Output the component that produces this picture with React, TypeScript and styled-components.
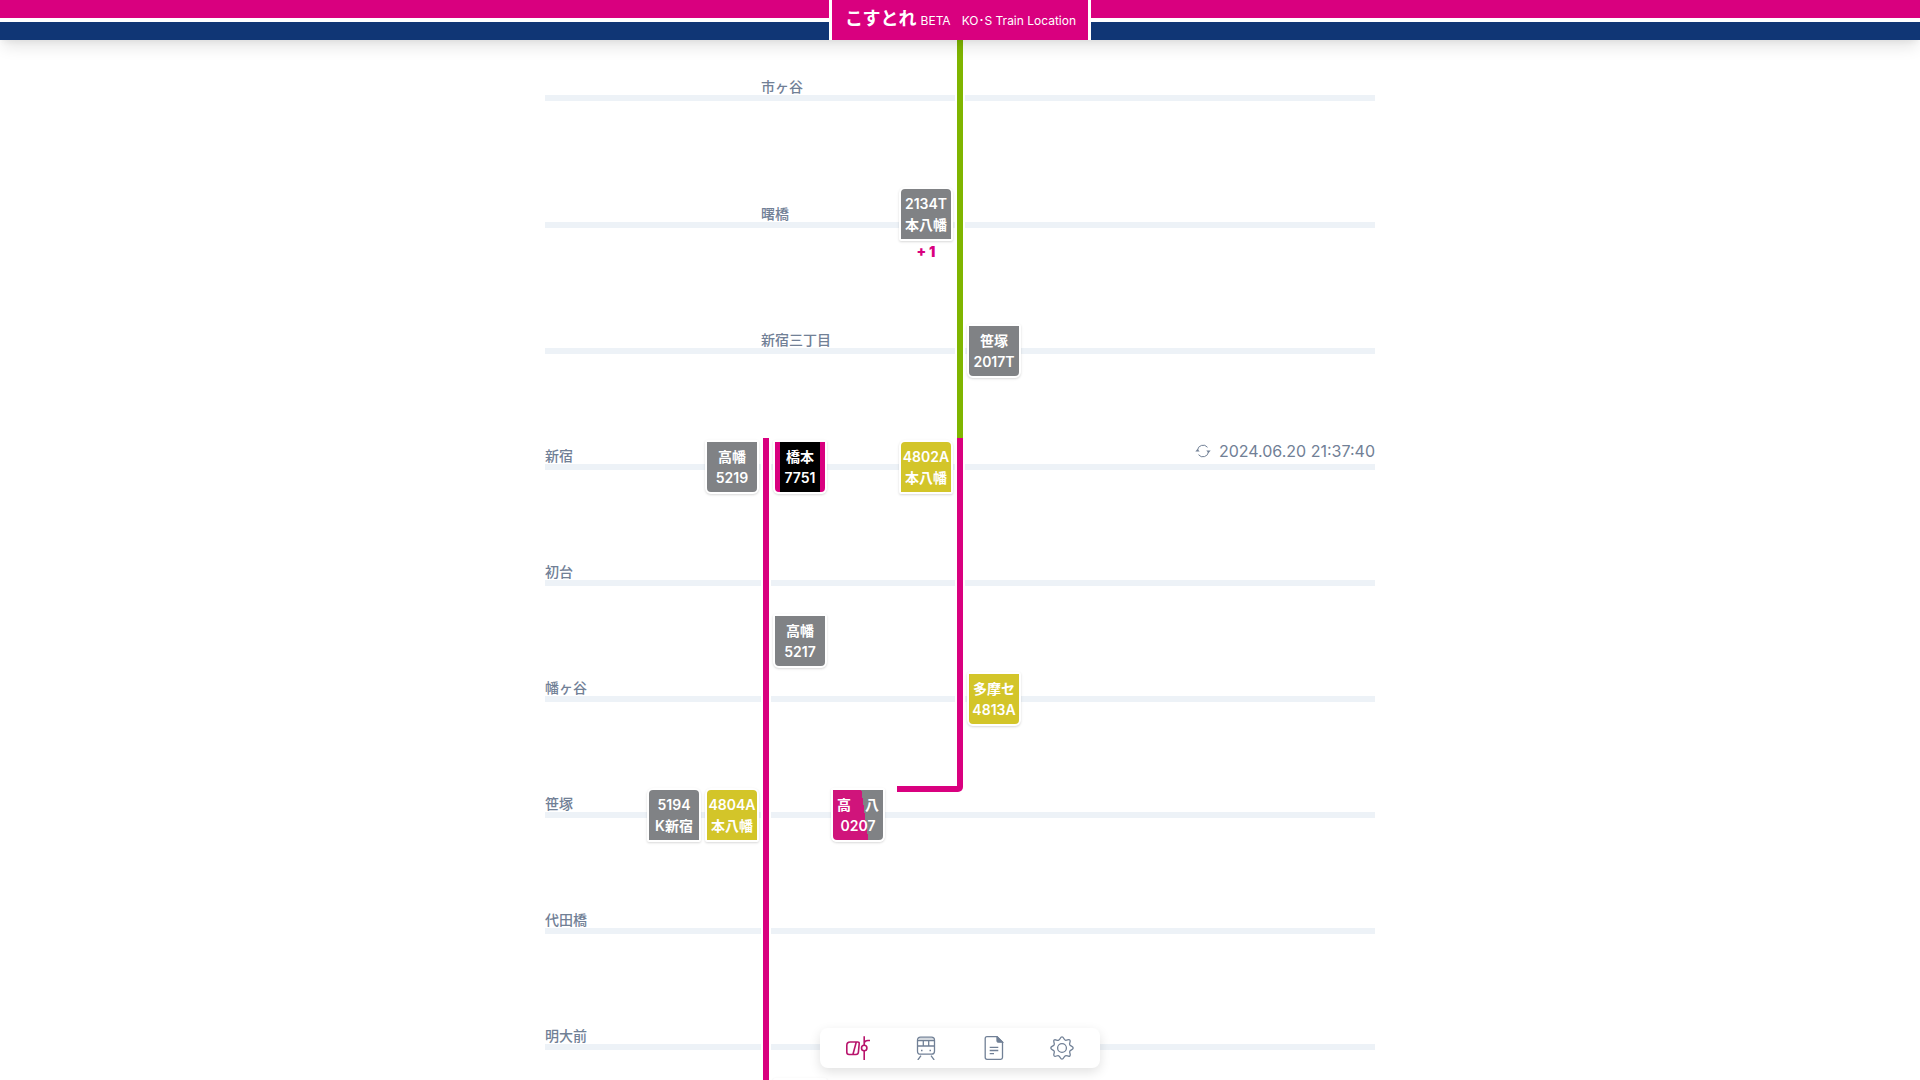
import React from "react";
import styled, { createGlobalStyle, css } from "styled-components";

const PINK = "#d9007f";
const GREEN = "#7fb500";
const GRAY = "#808285";
const YELLOW = "#d3c529";
const SLATE = "#718096";

const GlobalStyle = createGlobalStyle`
  *, *::before, *::after { box-sizing: border-box; }
  body {
    margin: 0;
    background: #fff;
    color: ${SLATE};
    font-family: Inter, "Noto Sans CJK JP", sans-serif;
  }
`;

const Page = styled.div`
  height: 100vh;
  overflow: hidden;
  display: flex;
  flex-direction: column;
`;

const Header = styled.header`
  position: relative;
  z-index: 3;
  flex: none;
  height: 40px;
  display: flex;
  justify-content: center;
  background: linear-gradient(#d9007f 18px, #fff 18px, #fff 22px, #103675 22px);
  box-shadow: 0 10px 15px -3px rgba(0, 0, 0, 0.1), 0 4px 6px -2px rgba(0, 0, 0, 0.05);
`;

const Brand = styled.h1`
  margin: 0;
  padding: 0 12px 0 13px;
  display: flex;
  align-items: baseline;
  border: solid #fff;
  border-width: 0 3px;
  background: ${PINK};
  color: #fff;
  font-size: 12px;
  font-weight: 400;
  line-height: 38px;
  white-space: nowrap;
`;

const BrandName = styled.span`
  font-size: 18px;
  font-weight: 700;
  margin-right: 4px;
`;

const Subtitle = styled.span`
  margin-left: 11px;
`;

const Board = styled.main`
  flex: none;
  width: 100%;
  max-width: 830px;
  margin: 0 auto;
  display: grid;
  grid-template-columns: 100px 58px 58px 10px 58px 58px 10px 58px 10px 58px minmax(0, 1fr);
  grid-template-rows: 29px 58px 58px 79px;
  grid-auto-rows: 58px;
`;

const StationRow = styled.div<{ $row: number }>`
  grid-row: ${(p) => p.$row};
  grid-column: 1 / -1;
  align-self: center;
  height: 6px;
  background: #edf2f7;
`;

const StationName = styled.h2<{ $row: number; $column: number }>`
  grid-row: ${(p) => p.$row};
  grid-column: ${(p) => p.$column} / span 3;
  align-self: center;
  margin: 0 0 22px;
  font-size: 14px;
  font-weight: 500;
  line-height: 20px;
  white-space: nowrap;
`;

const Track = styled.div<{ $column: number; $from: number; $to: number; $color: string }>`
  grid-column: ${(p) => p.$column};
  grid-row: ${(p) => p.$from} / ${(p) => p.$to};
  border: solid #fff;
  border-width: 0 2px;
  background: ${(p) => p.$color};
`;

const BranchEnd = styled.div`
  grid-column: 8 / 10;
  grid-row: 14;
  height: 6px;
  margin-left: 0;
  margin-right: 2px;
  border-radius: 0 0 5px 0;
  background: ${PINK};
`;

type Kind = "local" | "rapid" | "liner" | "split";

const kinds = {
  local: css`background: ${GRAY};`,
  rapid: css`background: ${YELLOW};`,
  liner: css`background: linear-gradient(90deg, ${PINK} 5px, #000 5px, #000 45px, ${PINK} 45px);`,
  split: css`background: linear-gradient(82deg, #d0147b 62%, ${GRAY} 62%);`,
};

const Slot = styled.div<{ $row: number; $column: number }>`
  grid-row: ${(p) => p.$row};
  grid-column: ${(p) => p.$column};
  align-self: start;
  justify-self: center;
  padding-top: 2px;
  position: relative;
`;

const Train = styled.button<{ $kind: Kind; $up: boolean }>`
  display: flex;
  flex-direction: column;
  justify-content: center;
  width: 54px;
  height: 54px;
  padding: 0;
  border: 2px solid #fff;
  border-radius: ${(p) => (p.$up ? "6px 6px 2px 2px" : "2px 2px 6px 6px")};
  ${(p) => kinds[p.$kind]}
  background-origin: padding-box;
  box-shadow: 0 1px 3px rgba(0, 0, 0, 0.1), 0 1px 2px rgba(0, 0, 0, 0.06);
  color: #fff;
  font: 600 14px/21px Inter, "Noto Sans CJK JP", sans-serif;
  white-space: nowrap;
  cursor: pointer;
`;

const TrainLine = styled.span<{ $spread?: boolean }>`
  display: flex;
  width: 100%;
  height: 21px;
  padding: 0 ${(p) => (p.$spread ? 4 : 0)}px;
  justify-content: ${(p) => (p.$spread ? "space-between" : "center")};
`;

const More = styled.div`
  color: ${PINK};
  font-size: 14px;
  font-weight: 900;
  line-height: 21px;
  text-align: center;
`;

const Refresh = styled.button`
  grid-row: 8;
  grid-column: 11;
  align-self: start;
  justify-self: end;
  display: flex;
  align-items: center;
  gap: 8px;
  padding: 1px 0 0;
  border: 0;
  background: none;
  color: inherit;
  font: 400 16px/24px Inter, sans-serif;
  cursor: pointer;
`;

const Nav = styled.nav`
  position: fixed;
  z-index: 4;
  bottom: 12px;
  left: 50%;
  transform: translateX(-50%);
  width: 280px;
  height: 40px;
  padding: 0 4px;
  display: flex;
  border-radius: 8px;
  background: #fff;
  box-shadow: 0 4px 12px rgba(0, 0, 0, 0.12);
`;

const NavLink = styled.a<{ $active?: boolean }>`
  flex: 1;
  display: flex;
  align-items: center;
  justify-content: center;
  color: ${(p) => (p.$active ? "#b8146c" : SLATE)};
`;

const stations = [
  { name: "市ヶ谷", row: 2, column: 4 },
  { name: "曙橋", row: 4, column: 4 },
  { name: "新宿三丁目", row: 6, column: 4 },
  { name: "新宿", row: 8, column: 1 },
  { name: "初台", row: 10, column: 1 },
  { name: "幡ヶ谷", row: 12, column: 1 },
  { name: "笹塚", row: 14, column: 1 },
  { name: "代田橋", row: 16, column: 1 },
  { name: "明大前", row: 18, column: 1 },
];

interface TrainData {
  row: number;
  column: number;
  number: string;
  bound: string[];
  kind: Kind;
  up?: boolean;
  more?: number;
}

const trains: TrainData[] = [
  { row: 4, column: 8, number: "2134T", bound: ["本八幡"], kind: "local", up: true, more: 1 },
  { row: 6, column: 10, number: "2017T", bound: ["笹塚"], kind: "local" },
  { row: 8, column: 3, number: "5219", bound: ["高幡"], kind: "local" },
  { row: 8, column: 5, number: "7751", bound: ["橋本"], kind: "liner" },
  { row: 8, column: 8, number: "4802A", bound: ["本八幡"], kind: "rapid", up: true },
  { row: 11, column: 5, number: "5217", bound: ["高幡"], kind: "local" },
  { row: 12, column: 10, number: "4813A", bound: ["多摩セ"], kind: "rapid" },
  { row: 14, column: 2, number: "5194", bound: ["K新宿"], kind: "local", up: true },
  { row: 14, column: 3, number: "4804A", bound: ["本八幡"], kind: "rapid", up: true },
  { row: 14, column: 6, number: "0207", bound: ["高", "八"], kind: "split" },
  { row: 19, column: 5, number: "", bound: [], kind: "local" },
];

function TrainCard({ train }: { train: TrainData }) {
  const number = <TrainLine key="number">{train.number}</TrainLine>;
  const bound = (
    <TrainLine key="bound" $spread={train.bound.length > 1}>
      {train.bound.map((b) => (
        <span key={b}>{b}</span>
      ))}
    </TrainLine>
  );
  return (
    <Slot $row={train.row} $column={train.column}>
      <Train type="button" $kind={train.kind} $up={!!train.up}>
        {train.up ? [number, bound] : [bound, number]}
      </Train>
      {train.more && <More>+ {train.more}</More>}
    </Slot>
  );
}

const icon = { width: 24, height: 24, viewBox: "0 0 24 24", fill: "none", stroke: "currentColor", strokeWidth: 1.3 };

const LocationIcon = () => (
  <svg {...icon} strokeWidth={1.6}>
    <path d="M4.200 6h7.500q1.600 0 1.500 1.600l-.8 8.700q-.2 2.200-2.400 2.200H3q-2.200 0-2.200-2.200V9.400Q.8 6 4.200 6zM10.300 6 6.900 18.500M18.200.3v9M18.200 14.800V24M24 4.500h-2q-3.800 0-3.800 3.300" />
    <circle cx="18.200" cy="12" r="2.700" />
  </svg>
);

const TrainIcon = () => (
  <svg {...icon}>
    <path d="M3.500 4.700h17M3.500 10h17M9.300 4.700V10M14.700 4.700V10M7 19.700l-3.200 4.300M17 19.700l3.200 4.300" />
    <path d="M6.500 1.200h11q3 0 3 3v11q0 3-3 3h-11q-3 0-3-3v-11q0-3 3-3z" />
    <path d="M4.500 2h15v2.500h-15z" fill="currentColor" fillOpacity=".3" stroke="none" />
    <path d="M7 14.500h1.500M15.500 14.500H17" strokeWidth="1.600" />
  </svg>
);

const DocIcon = () => (
  <svg {...icon}>
    <path d="M5 .7h10l5.500 5.500V21.500q0 1.800-1.800 1.800H5q-1.800 0-1.800-1.800v-19Q3.200.7 5 .7zM7.700 11.300h8.600M7.700 14.500h8.600M7.700 17.700h4.300" />
    <path d="M15 .7v3.700q0 1.800 1.800 1.800h3.700z" fill="currentColor" />
  </svg>
);

const GearIcon = () => (
  <svg {...icon} strokeLinejoin="round">
    <circle cx="12" cy="12" r="4.400" />
    <path d="M12 .8C13.800.8 13.700 3.600 15.300 4.200S18.700 2.800 19.900 4.100 18.900 7.100 19.700 8.700 23.200 10.200 23.200 12 20.500 13.700 19.800 15.300 21.200 18.700 19.900 19.900 16.900 19.100 15.300 19.800 13.800 23.200 12 23.200 10.300 20.500 8.700 19.800 5.300 21.200 4.100 19.900 4.900 16.900 4.200 15.300.8 13.800.8 12 3.500 10.300 4.200 8.700 2.800 5.300 4.100 4.100 7.100 4.900 8.700 4.200 10.200.8 12 .8z" />
  </svg>
);

const RefreshIcon = () => (
  <svg width="16" height="16" viewBox="0 0 16 16" fill="none" stroke="currentColor" strokeWidth="1">
    <path d="M2.500 7.500A5.600 5.600 0 0 1 12.500 4.300M13.500 8.500A5.600 5.600 0 0 1 3.500 11.700" />
    <path d="M.3 8.500 2.500 6l2.200 2.500zM11.300 7.500 13.500 10l2.200-2.500z" fill="currentColor" stroke="none" />
  </svg>
);

export default function App() {
  return (
    <Page>
      <GlobalStyle />
      <Header>
        <Brand>
          <BrandName>こすとれ</BrandName>
          <span>BETA</span>
          <Subtitle>KO･S Train Location</Subtitle>
        </Brand>
      </Header>
      <Board>
        {stations.map((s) => (
          <StationRow key={s.name} $row={s.row} />
        ))}
        <Track $column={9} $from={1} $to={8} $color={GREEN} />
        <Track $column={9} $from={8} $to={14} $color={PINK} />
        <BranchEnd />
        <Track $column={4} $from={8} $to={20} $color={PINK} />
        {stations.map((s) => (
          <StationName key={s.name} $row={s.row} $column={s.column}>{s.name}</StationName>
        ))}
        {trains.map((t) => (
          <TrainCard key={`${t.row}-${t.column}`} train={t} />
        ))}
        <Refresh type="button">
          <RefreshIcon />
          <time dateTime="2024-06-20T21:37:40">2024.06.20 21:37:40</time>
        </Refresh>
      </Board>
      <Nav>
        <NavLink href="#location" aria-label="Train location" $active><LocationIcon /></NavLink>
        <NavLink href="#trains" aria-label="Trains"><TrainIcon /></NavLink>
        <NavLink href="#notes" aria-label="Notes"><DocIcon /></NavLink>
        <NavLink href="#settings" aria-label="Settings"><GearIcon /></NavLink>
      </Nav>
    </Page>
  );
}
